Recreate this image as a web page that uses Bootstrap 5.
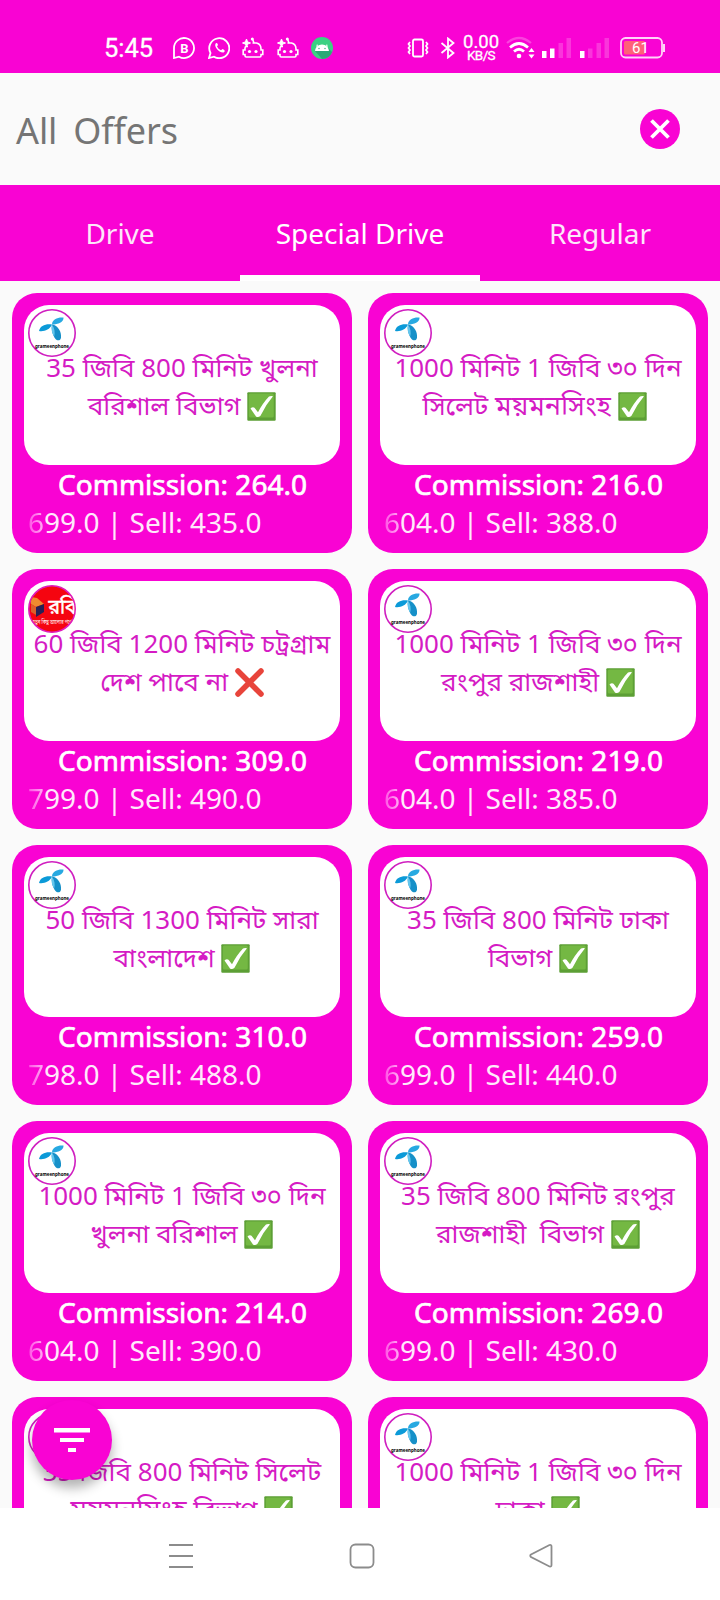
<!DOCTYPE html>
<html lang="bn">
<head>
<meta charset="utf-8">
<meta name="viewport" content="width=device-width, initial-scale=1">
<title>All Offers</title>
<link rel="stylesheet" href="https://cdn.jsdelivr.net/npm/bootstrap@5.3.0/dist/css/bootstrap.min.css">
<style>
:root{--pink:#f903d3}
body{font-family:"Noto Sans","Noto Sans Bengali",sans-serif;background:#fafafa;height:1600px;overflow:hidden}
svg{display:block;flex:none}
.bg-pink{background:var(--pink)}
.status{height:73px;padding:23px 54px 0 104px}
.status-row{height:50px}
.clock{font:400 25.500px/54px Roboto,sans-serif;width:69px;-webkit-text-stroke:.3px #fff}
.rate{font:400 18.500px/17px Roboto,sans-serif;text-align:center;width:36px;-webkit-text-stroke:.3px #fff}
.rate small{display:block;font-size:13.500px;line-height:15px;letter-spacing:-.6px;margin-top:-3px}
.head{height:112px;padding:0 40px 0 16px}
.head h1{font-size:36px;line-height:1;color:#757575;white-space:pre;font-weight:400;word-spacing:-1.300px;letter-spacing:-.1px;padding-top:3px}
.tabs{height:96px}
.tabs .nav-link{width:240px;height:96px;padding:0;font-size:28px;line-height:96px;color:#fde6fa;border-radius:0;border-bottom:6px solid transparent}
.tabs .nav-link.active{border-color:#fff;color:#fff}
.offers{height:1227px;padding:12px;overflow:hidden}
.grid{display:grid;grid-template-columns:340px 340px;gap:16px}
.offer{height:260px;border-radius:25px;padding:12px}
.pane{height:160px;border-radius:25px;padding-top:42.500px;font-size:26px;line-height:38px;color:#d51bc4}
.pane span{display:block;white-space:pre}
.pane .wide{display:inline;font-size:26.900px;line-height:1}
.pane .tick{display:inline-block;width:29px;height:29px;vertical-align:-6px}
.logo{left:4px;top:4px}
.com{font-size:28px;line-height:38px;height:38px;padding-left:1px;-webkit-text-stroke:.7px #fff}
.sell{font-size:28px;line-height:39px;padding-left:4px;color:#ffe9fb}
.sell b{font-weight:400;background:linear-gradient(90deg,#ff4fe4,#ffb0f3);-webkit-background-clip:text;color:transparent}
.fab{left:32px;top:1119px;width:80px;height:80px;box-shadow:0 8px 12px rgba(0,0,0,.3)}
.sys{height:92px;padding:4px 167px 0 168px}
</style>
</head>
<body>
<svg width="0" height="0" class="position-absolute">
<defs>
<symbol id="gp" viewBox="0 0 48 48"><circle cx="24" cy="24" r="23.2" fill="#fff" stroke="#d01fc0" stroke-width="1.6"/>
<path d="M24 15.500C24 10 30 8 35.500 8.500 36 13 30 15.500 24 15.500z" fill="#27a9e1"/><path d="M24 15.500c-6-1-12 1-13 6.500 5 .8 10.500-1 13-6.500z" fill="#0b9ad8"/><path d="M24 15.500c6 1 9.500 7 9 13-.3 3.500-4 3.500-5.500 1.500-3-4-4.500-9.500-3.500-14.500z" fill="#1690c8"/><path d="M24 15.500c-1 5 0 9 2.200 12 1-4 .5-8-2.200-12z" fill="#64c6ed"/>
<text x="24" y="38.500" text-anchor="middle" font-family="Noto Sans" font-size="5.500" font-weight="700" textLength="34" lengthAdjust="spacingAndGlyphs">grameenphone</text></symbol>
<symbol id="robi" viewBox="0 0 48 48"><clipPath id="rc"><circle cx="24" cy="24" r="22.500"/></clipPath><circle cx="24" cy="24" r="23.2" fill="#f50510" stroke="#e01bbd" stroke-width="1.6"/>
<g clip-path="url(#rc)"><path d="M3 12l6 1 7 6-8 3-5-3z" fill="#ef8a2f"/><path d="M3 19l5 3v8l-5-3z" fill="#d9602a"/><path d="M8 22l8-3v8l-8 5z" fill="#272055"/>
<text x="20.500" y="28.500" font-size="20" fill="#fff" stroke="#fff" stroke-width=".5" textLength="28" lengthAdjust="spacingAndGlyphs">রবি</text><text x="4" y="38.500" font-size="5.500" fill="#fff" textLength="40" lengthAdjust="spacingAndGlyphs">নতুন কিছু আলোর পথে</text></g></symbol>
<symbol id="ok" viewBox="0 0 29 29"><rect x=".3" y=".3" width="28.4" height="28.4" rx="1" fill="#5c9f35"/><rect x="1.8" y="1.500" width="25" height="24" rx="1.500" fill="#74b843"/><path d="M3.500 16.500q2-1.800 4-.8l3.500 4.500q5-9.500 11-15.700 2-1 4-.2-7.500 8.700-12.500 19.500-2.500 2-4.500.6z" fill="#fff"/></symbol>
<symbol id="no" viewBox="0 0 29 29"><path d="M3 3l23 23M26 3L3 26" stroke="#e8443b" stroke-width="5.500" stroke-linecap="round"/></symbol>
<symbol id="bot" viewBox="0 0 22 22"><path d="M6 9.500H4.500Q3 9.500 3 11v2H1.200v4.500H3v1.300q0 1.200 1.200 1.200h13.600q1.200 0 1.200-1.200v-1.300h1.800V13H19v-1q0-5-4.500-6h-4" fill="none" stroke="#fff" stroke-width="1.600"/><path d="M4.500 2l1.100 2.900L8.500 6 5.600 7.100 4.500 10 3.400 7.100.5 6l2.900-1.100z" fill="#fff" stroke="#fff"/><path d="M10.500 2l1.500 4" stroke="#fff" stroke-width="1.500"/><circle cx="10.300" cy="1.900" r="1.500" fill="#fff"/><circle cx="7.500" cy="14.500" r="1.600" fill="#fff"/><circle cx="14" cy="14.500" r="1.600" fill="#fff"/></symbol>
</defs></svg>

<header class="status bg-pink text-white d-flex justify-content-between">
 <div class="status-row d-flex align-items-center">
  <div class="clock">5:45</div>
  <div class="d-flex" style="gap:12.500px">
   <svg width="22" height="22" viewBox="0 0 22 22"><path d="M1 21V11a10 10 0 1 1 5 8.700z" fill="none" stroke="#fff" stroke-width="1.800"/><text x="11.500" y="15.500" text-anchor="middle" font-family="Roboto" font-size="13" font-weight="700" fill="#fff">B</text></svg>
   <svg width="22" height="22" viewBox="0 0 22 22"><path d="M1 21l1.500-5A10 10 0 1 1 6 19.700z" fill="none" stroke="#fff" stroke-width="1.800"/><path d="M8 6c-3 3 3 10 7.500 9.500 2-1 1.500-2.500-1-3.500l-1.500 1.300Q10 12 9 9.500l1-1.500Q9.500 5.500 8 6z" fill="#fff"/></svg>
   <svg width="22" height="22"><use href="#bot"/></svg>
   <svg width="22" height="22"><use href="#bot"/></svg>
   <svg width="22" height="22" viewBox="0 0 22 22"><circle cx="11" cy="11" r="11" fill="#3bd183"/><path d="M4 14l13-3 4 4a11 11 0 0 1-10 7z" fill="#2aa876"/><path d="M4 14c.3-3 1.500-4.500 3-5.500L6 7m12 7c-.3-3-1.500-4.500-3-5.500L16 7M4 14q1-6.500 7-6.500t7 6.500z" fill="#fff"/><circle cx="8" cy="11.500" r=".7" fill="#3a7"/><circle cx="14" cy="11.500" r=".7" fill="#3a7"/></svg>
  </div>
 </div>
 <div class="status-row d-flex align-items-center">
  <svg width="22" height="20" viewBox="0 0 22 20" fill="none" stroke="#fff"><rect x="6" y="1.500" width="10" height="17" rx="1.500" stroke-width="1.800"/><path d="M3 4L1.500 6 3 8l-1.500 2L3 12l-1.500 2L3 16M19 4l1.500 2L19 8l1.500 2-1.500 2 1.500 2-1.500 2" stroke-width="1.700"/></svg>
  <svg width="16" height="22" viewBox="0 0 16 22" style="margin:0 7px 0 11px" fill="none" stroke="#fff" stroke-width="1.800"><path d="M1.500 6l12 10L8 20.500V1.500L13.500 6l-12 10"/></svg>
  <div class="rate">0.00<small>KB/S</small></div>
  <svg width="29" height="24" viewBox="0 0 29 24" style="margin-left:7px" fill="none" stroke="#fff"><path d="M1 7q12-10 24 0" stroke-width="2.200" opacity=".25"/><path d="M4 11.500q9-8 18 0M8 15.500q5-4.500 10 0" stroke-width="2.700"/><circle cx="13" cy="20" r="2.300" fill="#fff" stroke="none"/><path d="M22.500 16l3-4 3 4zM22.500 18.500l3 4 3-4z" fill="#fff" stroke="none"/></svg>
  <svg width="30" height="22" viewBox="0 0 30 22" fill="#fff" style="margin-left:7px"><path d="M0 14h4.500v7H0zM8 11.500h4.500V21H8z"/><path d="M16.500 6H21v15h-4.500zM24.500 1H29v20h-4.500z" opacity=".2"/></svg>
  <svg width="30" height="22" viewBox="0 0 30 22" fill="#fff" style="margin-left:8px"><path d="M0 14h4.500v7H0z"/><path d="M8 11.500h4.500V21H8zM16.500 6H21v15h-4.500zM24.500 1H29v20h-4.500z" opacity=".2"/></svg>
  <svg width="46" height="22" viewBox="0 0 46 22" style="margin-left:10px"><rect x="1" y="1" width="41" height="19.500" rx="4.500" fill="none" stroke="#ffd3f8" stroke-width="1.800"/><rect x="4" y="4" width="21" height="13.500" rx="1.500" fill="#ff6178"/><path d="M44 7v8" stroke="#ffd3f8" stroke-width="2"/><text x="20.500" y="16" text-anchor="middle" font-family="Roboto" font-size="15" fill="#fff">61</text></svg>
 </div>
</header>

<div class="head d-flex align-items-center justify-content-between"><h1 class="m-0">All  Offers</h1>
<svg width="40" height="40" viewBox="0 0 40 40"><circle cx="20" cy="20" r="20" fill="#f903d3"/><path d="M11.500 11.500l17 17m0-17l-17 17" stroke="#fff" stroke-width="3.800"/></svg></div>

<nav class="tabs nav bg-pink flex-nowrap text-center"><a class="nav-link" href="#">Drive</a><a class="nav-link active" href="#">Special Drive</a><a class="nav-link" href="#">Regular</a></nav>

<main class="offers position-relative">
 <div class="grid" id="grid"></div>
 <button class="fab btn bg-pink rounded-circle border-0 position-absolute p-0 d-flex align-items-center justify-content-center" aria-label="Filter"><svg width="36" height="26" fill="#fff"><path d="M0 1h36v4.500H0zM6 11h24v4H6zM14 21h8v4h-8z"/></svg></button>
</main>
<footer class="sys bg-white d-flex align-items-center justify-content-between">
<svg width="26" height="26" stroke="#8c8c8c" stroke-width="2"><path d="M1 2h24M1 13h24M1 24h24"/></svg>
<svg width="26" height="26" fill="none" stroke="#8c8c8c" stroke-width="1.800"><rect x="1.500" y="1.500" width="23" height="23" rx="5"/></svg>
<svg width="24" height="26" fill="none" stroke="#8c8c8c" stroke-width="1.800"><path d="M20.500 2L2 11.500q-1.500 1 0 2.500l18.500 9.500q2 .5 2-1.500V3.500q0-2-2-1.500z"/></svg>
</footer>
<script>
const offers=[
['gp','35 জিবি 800 মিনিট খুলনা','বরিশাল বিভাগ','ok','264.0','699.0','435.0'],
['gp','1000 মিনিট 1 জিবি ৩০ দিন','সিলেট <span class="wide">ময়মনসিংহ</span>','ok','216.0','604.0','388.0',' '],
['robi','60 জিবি 1200 মিনিট চট্রগ্রাম','দেশ পাবে না','no','309.0','799.0','490.0'],
['gp','1000 মিনিট 1 জিবি ৩০ দিন','রংপুর রাজশাহী','ok','219.0','604.0','385.0'],
['gp','50 জিবি 1300 মিনিট সারা','বাংলাদেশ','ok','310.0','798.0','488.0'],
['gp','35 জিবি 800 মিনিট ঢাকা','বিভাগ','ok','259.0','699.0','440.0'],
['gp','1000 মিনিট 1 জিবি ৩০ দিন','খুলনা বরিশাল','ok','214.0','604.0','390.0'],
['gp','35 জিবি 800 মিনিট রংপুর','রাজশাহী  বিভাগ','ok','269.0','699.0','430.0'],
['gp','35 জিবি 800 মিনিট সিলেট','<span class="wide">ময়মনসিংহ</span> বিভাগ','ok'],
['gp','1000 মিনিট 1 জিবি ৩০ দিন','ঢাকা','ok']];
document.getElementById('grid').innerHTML=offers.map(([logo,a,b,m,c,p,s,end=''])=>`<article class="offer bg-pink text-white">
<div class="pane bg-white text-center position-relative"><svg class="logo position-absolute" width="48" height="48"><use href="#${logo}"/></svg><span class="position-relative">${a}</span><span>${b} <svg class="tick"><use href="#${m}"/></svg>${end}</span></div>
${c?`<div class="com text-center">Commission: ${c}</div><div class="sell"><b>${p[0]}</b>${p.slice(1)} | Sell: ${s}</div>`:''}</article>`).join('');
</script>
<script src="https://cdn.jsdelivr.net/npm/bootstrap@5.3.0/dist/js/bootstrap.bundle.min.js"></script>
</body>
</html>
